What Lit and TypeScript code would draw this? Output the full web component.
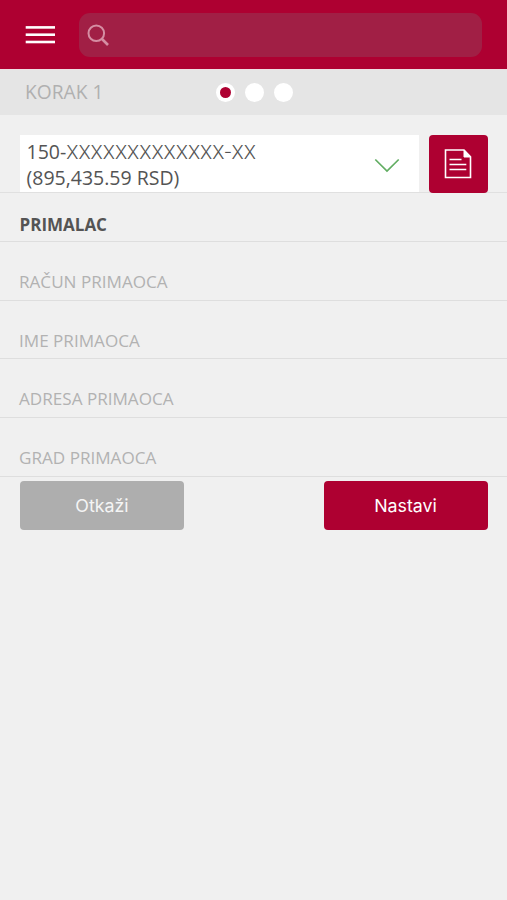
import { LitElement, html, css, svg } from "lit";
import { customElement } from "lit/decorators.js";

const FIELDS = [
  { name: "racun", label: "RAČUN PRIMAOCA" },
  { name: "ime", label: "IME PRIMAOCA" },
  { name: "adresa", label: "ADRESA PRIMAOCA" },
  { name: "grad", label: "GRAD PRIMAOCA" },
];

@customElement("app-root")
export class AppRoot extends LitElement {
  static styles = css`
    :host {
      display: flex;
      flex-direction: column;
      box-sizing: border-box;
      height: 900px;
      overflow: hidden;
      background: #f0f0f0;
      font-family: "Open Sans", "Noto Sans", sans-serif;
      color: #545454;
    }
    * { box-sizing: border-box; }
    svg { display: block; fill: none; flex: none; }
    header {
      height: 69px;
      flex: none;
      background: #ae0031;
      display: flex;
      align-items: flex-start;
      padding: 13px 25px 0;
      gap: 23px;
    }
    .menu { margin: 12px 0 0; stroke: #fff; stroke-width: 2.6; }
    .search {
      flex: 1;
      height: 44px;
      border-radius: 11px;
      background: #a11f45;
      padding: 11px 0 0 8px;
    }
    .lens { stroke: #d58ea3; stroke-width: 2; }
    .steps {
      height: 46px;
      flex: none;
      display: flex;
      align-items: center;
      background: #e5e5e5;
      border-top: 1px solid #eedfe2;
      padding-left: 25px;
    }
    .step { width: 190.7px; font-size: 19.2px; line-height: 26px; color: #b0b0b0; padding-bottom: 1px; }
    .dots { display: flex; gap: 10.4px; }
    .dot {
      width: 19px;
      height: 19px;
      border-radius: 50%;
      background: #fff;
      display: grid;
      place-items: center;
    }
    .active::after {
      content: "";
      width: 11px;
      height: 11px;
      border-radius: 50%;
      background: #ae0031;
    }
    .account {
      height: 78px;
      flex: none;
      display: flex;
      gap: 10px;
      padding: 20px 19px 0 20px;
      border-bottom: 1px solid #e0e0e0;
    }
    .select {
      width: 399px;
      height: 57px;
      background: #fff;
      display: flex;
      justify-content: space-between;
      padding: 4px 19px 0 6.5px;
      font-size: 19.5px;
      line-height: 26px;
      white-space: nowrap;
    }
    .number { display: flex; }
    .mask { font-family: Inter, sans-serif; font-weight: 300; font-size: 18.4px; }
    .chevron { margin-top: 19px; stroke: #61ad62; stroke-width: 1.7; }
    .doc {
      width: 59px;
      height: 58px;
      border-radius: 4px;
      background: #ae0031;
      display: grid;
      place-items: center;
      padding-right: 2px;
      padding-bottom: 1px;
      stroke: #fff;
      stroke-width: 1.6;
    }
    .title {
      height: 49px;
      flex: none;
      padding: 19px 20px 0 19.5px;
      border-bottom: 1px solid #dedede;
      font-size: 17px;
      line-height: 26px;
      font-weight: 700;
    }
    .field {
      height: 58.7px;
      flex: none;
      padding: 27px 19px 0;
      border-bottom: 1px solid #dedede;
      font-size: 17.1px;
      line-height: 26px;
      color: #b2b2b2;
    }
    .actions { display: flex; justify-content: space-between; padding: 4.6px 19.5px 0 20px; }
    .button {
      width: 164px;
      height: 49px;
      border-radius: 4px;
      display: grid;
      place-items: center;
      color: #fff;
      background: #ae0031;
      font: 400 17.8px/26px Inter, sans-serif;
    }
    .muted { background: #aeaeae; color: #f5f5f5; }
  `;

  render() {
    return html`
      <header>
        <svg class="menu" width="31" height="21" viewBox="0 0 31 21">
          ${[2.4, 9.7, 17].map((y) => svg`<path d="M.7 ${y}H30" />`)}
        </svg>
        <div class="search">
          <svg class="lens" width="24" height="24" viewBox="0 0 24 24">
            <circle cx="9.3" cy="9.2" r="7.8" /><path d="M15 15l6 6" stroke-width="2.6" />
          </svg>
        </div>
      </header>
      <div class="steps">
        <div class="step">KORAK 1</div>
        <div class="dots"><i class="dot active"></i><i class="dot"></i><i class="dot"></i></div>
      </div>
      <div class="account">
        <div class="select">
          <div>
            <div class="number"><span>150-</span><span class="mask">XXXXXXXXXXXXX-XX</span></div>
            <div>(895,435.59 RSD)</div>
          </div>
          <svg class="chevron" width="26" height="16" viewBox="0 0 26 16"><path d="M1.3 1.5L13 13L24.7 1.5" /></svg>
        </div>
        <div class="doc">
          <svg width="28" height="30" viewBox="0 0 28 30">
            <path d="M1.5 1H20L26.5 7.8V28.5H1.5Z" />
            <path d="M20 1V8H26.5Z" fill="#fff" stroke="#fff" stroke-width="1" />
            <path d="M5.5 10.5H17.5M5.5 15.5H22.3M5.5 20.5H22.3" />
          </svg>
        </div>
      </div>
      <div class="title">PRIMALAC</div>
      ${FIELDS.map((f) => html`<div class="field">${f.label}</div>`)}
      <div class="actions">
        <div class="button muted">Otkaži</div>
        <div class="button">Nastavi</div>
      </div>
    `;
  }
}
